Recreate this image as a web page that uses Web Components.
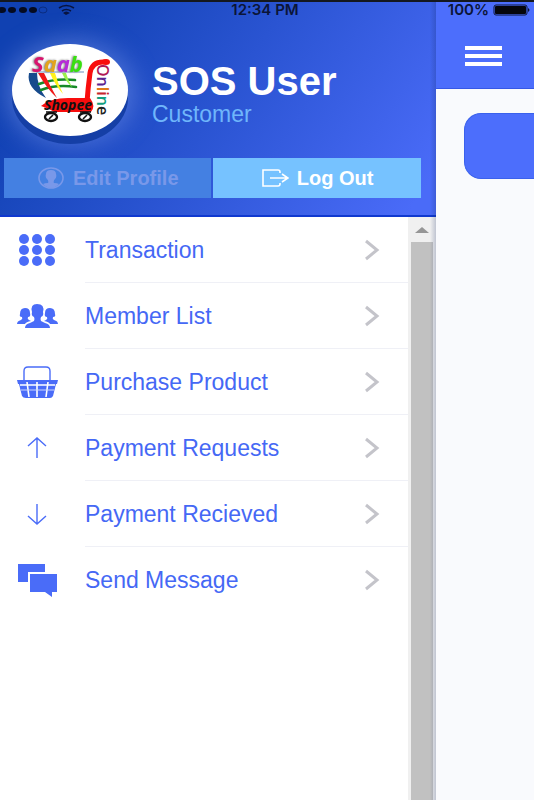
<!DOCTYPE html>
<html lang="en">
<head>
<meta charset="utf-8">
<meta name="viewport" content="width=device-width, initial-scale=1">
<title>SOS User</title>
<style>
  body {
    margin: 0;
    font-family: "Liberation Sans", Arial, sans-serif;
    background: #f9fafd;
  }
</style>
</head>
<body>
<app-shell>
  <status-bar slot="status"></status-bar>
  <side-drawer slot="drawer">
    <user-card slot="header" name="SOS User" role-name="Customer"></user-card>
    <menu-item icon="grid">Transaction</menu-item>
    <menu-item icon="members">Member List</menu-item>
    <menu-item icon="basket">Purchase Product</menu-item>
    <menu-item icon="up">Payment Requests</menu-item>
    <menu-item icon="down">Payment Recieved</menu-item>
    <menu-item icon="message">Send Message</menu-item>
  </side-drawer>
  <main-page></main-page>
</app-shell>

<script>
const icons = {
  grid: /* html */`
    <g fill="#4a6cf8">
      <circle cx="7" cy="7" r="5"/><circle cx="20" cy="7" r="5"/><circle cx="33" cy="7" r="5"/>
      <circle cx="7" cy="18" r="5"/><circle cx="20" cy="18" r="5"/><circle cx="33" cy="18" r="5"/>
      <circle cx="7" cy="29" r="5"/><circle cx="20" cy="29" r="5"/><circle cx="33" cy="29" r="5"/>
    </g>`,
  members: /* html */`
    <g fill="#4a6cf8">
      <path d="M0 26 Q0 23 4 22 Q6 21 5 19 Q2 19 3 16 Q3 10 8 10 Q13 10 13 15 Q14 19 11 19 Q10 21 12 22 L14 23 Q9 24 8 26Z"/>
      <path d="M41 26 Q41 23 37 22 Q35 21 36 19 Q39 19 38 16 Q38 10 33 10 Q28 10 28 15 Q27 19 30 19 Q31 21 29 22 L27 23 Q32 24 33 26Z"/>
      <path d="M8 30 Q8 26 13 25 L17 23 Q18 21 17 19 Q14 18 15 14 Q13 6 20 6 Q28 6 26 14 Q27 18 24 19 Q23 21 24 23 L28 25 Q33 26 33 30Z"/>
    </g>`,
  basket: /* html */`
    <path d="M7 17 V7 Q7 3 11 3 H29 Q33 3 33 7 V17" fill="none" stroke="#4a6cf8" stroke-width="1.4"/>
    <path d="M0 16 H41 L40 20 H1Z M2 20 H39 L36 32 Q35 34 33 34 H9 Q6 34 5 32Z" fill="#4a6cf8"/>
    <path d="M10 18 L12 33 M20 18 V33 M31 18 L29 33 M3 21 H38" stroke="#fff" stroke-width="1.6"/>
    <path d="M4 26 H37" stroke="#c9d4ff" stroke-width="1"/>`,
  up: '<path d="M20 28 V9 M11 16 L20 8 L29 16" fill="none" stroke="#4a6cf8" stroke-width="1.4"/>',
  down: '<path d="M20 8 V27 M11 20 L20 28 L29 20" fill="none" stroke="#4a6cf8" stroke-width="1.4"/>',
  message: /* html */`
    <path d="M1 2 H28 V10 H11 V20 H1Z" fill="#4a6cf8"/>
    <path d="M13 12 H40 V30 H35 V35 L28 30 H13Z" fill="#4a6cf8"/>`
}

class AppShell extends HTMLElement {
  constructor () {
    super()
    this.shadow = this.attachShadow({ mode: 'open' })
  }

  connectedCallback () {
    this.shadow.innerHTML = /* html */`
      <style>
        :host {
          display: grid;
          grid-template-columns: minmax(0, 40fr) minmax(0, 9fr);
          min-height: 100vh;
          position: relative;
          overflow: hidden;
        }

        /* the status bar lies over both headers */
        ::slotted([slot="status"]) {
          position: absolute;
          top: 0;
          left: 0;
          right: 0;
          z-index: 2;
        }
      </style>
      <slot name="status"></slot>
      <slot name="drawer"></slot>
      <slot></slot>
    `
  }
}

class StatusBar extends HTMLElement {
  constructor () {
    super()
    this.shadow = this.attachShadow({ mode: 'open' })
  }

  connectedCallback () {
    this.shadow.innerHTML = /* html */`
      <style>
        :host {
          display: grid;
          grid-template-columns: 1fr auto 1fr;
          align-items: center;
          box-sizing: border-box;
          border-top: 2px solid #14181f;
          padding-right: 4px;
          height: 18px;
          color: #0b1538;
          font: 600 15px/16px Inter, "Liberation Sans", sans-serif;
        }

        svg {
          display: block;
        }

        .right {
          display: flex;
          justify-content: flex-end;
          align-items: center;
          gap: 4px;
        }
      </style>
      <svg width="76" height="16" viewBox="0 0 76 16">
        <g fill="#050b20">
          <ellipse cx="2" cy="8" rx="4" ry="3"/><ellipse cx="12" cy="8" rx="4" ry="3"/>
          <ellipse cx="23" cy="8" rx="4" ry="3"/><ellipse cx="33" cy="8" rx="4" ry="3"/>
        </g>
        <ellipse cx="43" cy="8" rx="4" ry="3" fill="none" stroke="#0a2c80"/>
        <g fill="none" stroke="#081440" stroke-width="1.6">
          <path d="M59 6 Q66 1 74 6"/><path d="M62 9 Q66 6 71 9"/>
        </g>
        <path d="M63 11 Q66 8 70 11 L66 13Z" fill="#081440"/>
      </svg>
      <span>12:34 PM</span>
      <div class="right">
        <span>100%</span>
        <svg width="37" height="12" viewBox="0 0 37 12">
          <rect x="1" y="1" width="33" height="10" rx="2" fill="none" stroke="#0b1538"/>
          <rect x="2" y="2" width="31" height="8" rx="1" fill="#05060c"/>
          <path d="M35 4 Q38 6 35 8Z" fill="#0b1538"/>
        </svg>
      </div>
    `
  }
}

class ShopLogo extends HTMLElement {
  constructor () {
    super()
    this.shadow = this.attachShadow({ mode: 'open' })
  }

  connectedCallback () {
    this.shadow.innerHTML = /* html */`
      <style>
        :host {
          display: block;
          flex: none;
          width: 116px;
          height: 92px;
          border-radius: 50%;
          background: #fff;
          box-shadow: 0 8px 0 #153fa6, 0 2px 24px 8px rgba(140, 165, 245, 0.4);
        }

        svg {
          display: block;
        }

        text {
          font-family: "Open Sans", "Liberation Sans", sans-serif;
          font-weight: 700;
        }

        .saab {
          font-size: 22px;
          font-style: italic;
          filter: drop-shadow(-1px 0 1px #777);
        }

        .shopee {
          font-size: 14px;
          font-style: italic;
        }

        .online {
          font-size: 16px;
          font-weight: 600;
        }
      </style>
      <svg width="116" height="92" viewBox="0 0 116 92" role="img" aria-label="Saab Online Shopee">
        <path d="M24 28 H72" stroke="#6d8fc0" stroke-width="1"/>
        <path d="M17 29 Q14 44 34 54 Q25 42 25 29Z" fill="#174a8c"/>
        <g fill="none" stroke="#168a28" stroke-linecap="round">
          <path d="M27 40 Q43 34 63 36" stroke-width="2.6"/>
          <path d="M29 46 Q44 40 64 43" stroke-width="2.6"/>
        </g>
        <path d="M26 29 L32 29 Q38 42 45 54 Q35 45 26 29Z" fill="#f01818"/>
        <path d="M38 29 L43 29 Q46 40 51 50 Q43 41 38 29Z" fill="#fff21c"/>
        <path d="M50 29 L54 29 Q56 36 60 43 Q54 38 50 29Z" fill="#9bf04b"/>
        <path d="M93 18 Q80 17 78 29 Q76 44 75 58" fill="none" stroke="#f80d0d" stroke-width="5"/>
        <ellipse cx="94" cy="18" rx="4" ry="3" fill="#f80d0d"/>
        <path d="M29 62 Q40 53 60 54 H78 Q84 62 79 68 H42 Q38 65 29 62Z" fill="#f80d0d"/>
        <g fill="#fff" stroke="#111" stroke-width="2.4">
          <ellipse cx="39" cy="73" rx="6" ry="4"/>
          <ellipse cx="73" cy="73" rx="6" ry="4"/>
        </g>
        <path d="M34 68 H45 M68 68 H79 M37 75 L41 71 M71 75 L75 71" stroke="#111" stroke-width="1.6"/>
        <text class="saab" x="20" y="28"><tspan fill="#d8146e">S</tspan><tspan fill="#e3a51c">a</tspan><tspan fill="#b62bd8">a</tspan><tspan fill="#38e010">b</tspan></text>
        <text class="shopee" x="32" y="66" fill="#111">Shopee</text>
        <text class="online" transform="translate(85 20) rotate(90)"><tspan fill="#b01855">O</tspan><tspan fill="#5a2590">n</tspan><tspan fill="#e07a18">l</tspan><tspan fill="#c7262c">i</tspan><tspan fill="#12a080">n</tspan><tspan fill="#222">e</tspan></text>
      </svg>
    `
  }
}

class UserCard extends HTMLElement {
  constructor () {
    super()
    this.shadow = this.attachShadow({ mode: 'open' })
  }

  connectedCallback () {
    this.shadow.innerHTML = /* html */`
      <style>
        :host {
          display: block;
          box-sizing: border-box;
          padding: 44px 15px 17px 4px;
          border-bottom: 2px solid #1039cf;
          background: linear-gradient(124deg, #1041b2 12%, #2a54d2 50%, #4a6bf8 95%);
        }

        h1, p {
          margin: 0;
        }

        .user {
          display: flex;
          align-items: center;
          gap: 24px;
          padding-left: 8px;
        }

        .names {
          padding-top: 8px;
        }

        h1 {
          color: #fff;
          font-size: 40px;
          line-height: 40px;
        }

        p {
          color: #6fb6fb;
          font-size: 23px;
          line-height: 26px;
        }

        .actions {
          display: grid;
          grid-template-columns: 1fr 1fr;
          gap: 2px;
          margin-top: 22px;
        }

        button {
          display: flex;
          align-items: center;
          justify-content: center;
          gap: 8px;
          height: 40px;
          padding: 0;
          border: none;
          background: #76c2ff;
          color: #fff;
          font: bold 20px/24px "Liberation Sans", Arial, sans-serif;
          cursor: pointer;
        }

        .edit {
          background: #4480e2;
          color: #7998e9;
        }
      </style>
      <div class="user">
        <shop-logo></shop-logo>
        <div class="names">
          <h1>${this.getAttribute('name')}</h1>
          <p>${this.getAttribute('role-name')}</p>
        </div>
      </div>
      <div class="actions">
        <button class="edit" type="button">
          <svg width="28" height="24" viewBox="0 0 28 24">
            <ellipse cx="14" cy="12" rx="12" ry="10" fill="none" stroke="#7998e9" stroke-width="1.6"/>
            <path d="M6 18 Q8 17 11 17 Q12 15 10 13 Q8 11 9 8 Q9 4 14 4 Q19 4 19 8 Q20 11 18 13 Q16 15 17 17 Q20 17 22 18 Q14 26 6 18Z" fill="#7998e9"/>
          </svg>
          Edit Profile
        </button>
        <button type="button">
          <svg width="28" height="24" viewBox="0 0 28 24" fill="none" stroke="#fff" stroke-width="1.6">
            <path d="M19 7 V6 Q19 4 17 4 H2 V20 H17 Q19 20 19 18 V17"/>
            <path d="M9 12 H27 M21 8 L27 12 L21 16"/>
          </svg>
          Log Out
        </button>
      </div>
    `
  }
}

class MenuItem extends HTMLElement {
  constructor () {
    super()
    this.shadow = this.attachShadow({ mode: 'open' })
  }

  connectedCallback () {
    this.shadow.innerHTML = /* html */`
      <style>
        :host {
          display: block;
        }

        a {
          display: flex;
          align-items: stretch;
          gap: 27px;
          height: 66px;
          padding-left: 17px;
          color: #4568f5;
          font-size: 23px;
          line-height: 26px;
          text-decoration: none;
        }

        .icon {
          flex: none;
          align-self: center;
        }

        .label {
          display: flex;
          flex: 1;
          align-items: center;
          justify-content: space-between;
          box-sizing: border-box;
          padding-right: 28px;
          border-bottom: 1px solid #eff0f6;
        }

        :host(:last-of-type) .label {
          border-bottom-color: transparent;
        }
      </style>
      <a href="#">
        <svg class="icon" width="41" height="36" viewBox="0 0 41 36">${icons[this.getAttribute('icon')]}</svg>
        <span class="label">
          <slot></slot>
          <svg width="16" height="22" viewBox="0 0 16 22">
            <path d="M2 2 L13 11 L2 20" fill="none" stroke="#c4c4ca" stroke-width="3"/>
          </svg>
        </span>
      </a>
    `
  }
}

class SideDrawer extends HTMLElement {
  constructor () {
    super()
    this.shadow = this.attachShadow({ mode: 'open' })
  }

  connectedCallback () {
    this.shadow.innerHTML = /* html */`
      <style>
        :host {
          display: flex;
          flex-direction: column;
          position: relative;
          background: #fff;
        }

        /* shade along the drawer's right edge */
        :host::after {
          content: "";
          position: absolute;
          top: 0;
          right: 0;
          bottom: 0;
          width: 6px;
          background: linear-gradient(90deg, transparent, rgba(20, 40, 100, 0.22));
          pointer-events: none;
        }

        .body {
          display: flex;
          flex: 1;
        }

        nav {
          flex: 1;
        }

        .scroll {
          display: flex;
          flex-direction: column;
          width: 28px;
          background: #f0f0f0;
        }

        .scroll button {
          height: 25px;
          padding: 0;
          border: none;
          background: transparent;
        }

        .scroll svg {
          display: block;
          margin: 0 auto;
        }

        .thumb {
          flex: 1;
          margin: 0 3px;
          background: #c1c1c1;
        }
      </style>
      <slot name="header"></slot>
      <div class="body">
        <nav><slot></slot></nav>
        <div class="scroll">
          <button type="button" aria-label="Scroll up">
            <svg width="14" height="6" viewBox="0 0 14 6"><path d="M0 6 L7 0 L14 6Z" fill="#969696"/></svg>
          </button>
          <div class="thumb"></div>
        </div>
      </div>
    `
  }
}

class MainPage extends HTMLElement {
  constructor () {
    super()
    this.shadow = this.attachShadow({ mode: 'open' })
  }

  connectedCallback () {
    this.shadow.innerHTML = /* html */`
      <style>
        :host {
          display: block;
          overflow: hidden;
          background: #f9fafd;
        }

        header {
          box-sizing: border-box;
          padding: 46px 29px 22px;
          border-bottom: 1px solid #3558e6;
          background: #4c6efc;
        }

        button {
          display: flex;
          flex-direction: column;
          gap: 4px;
          padding: 0;
          border: none;
          background: none;
          cursor: pointer;
        }

        button span {
          width: 37px;
          height: 4px;
          background: #fff;
        }

        .card {
          box-sizing: border-box;
          height: 66px;
          margin: 24px 0 0 28px;
          border: 1px solid #3a61ec;
          border-right: none;
          border-radius: 17px 0 0 17px;
          background: #4c6efc;
        }
      </style>
      <header>
        <button type="button" aria-label="Menu"><span></span><span></span><span></span></button>
      </header>
      <div class="card"></div>
    `
  }
}

customElements.define('app-shell', AppShell)
customElements.define('status-bar', StatusBar)
customElements.define('shop-logo', ShopLogo)
customElements.define('user-card', UserCard)
customElements.define('menu-item', MenuItem)
customElements.define('side-drawer', SideDrawer)
customElements.define('main-page', MainPage)
</script>
</body>
</html>
